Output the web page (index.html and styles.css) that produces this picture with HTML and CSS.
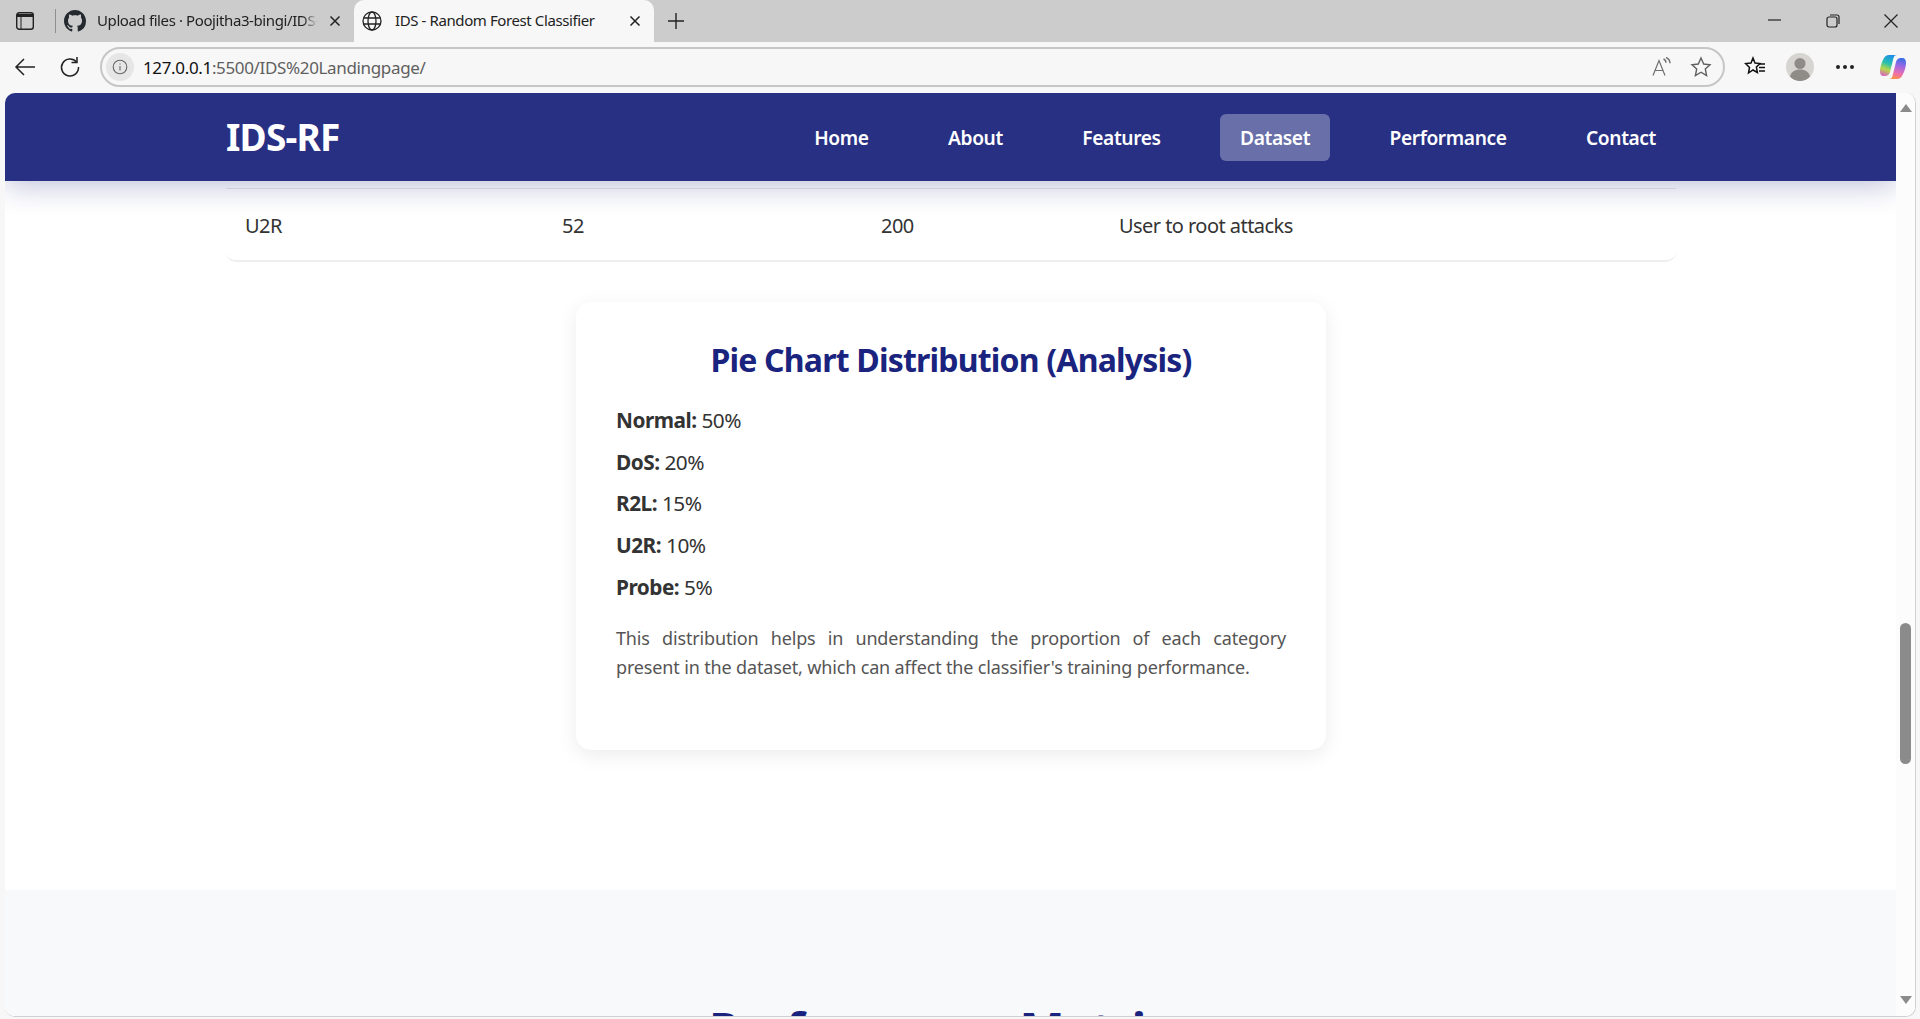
FILE: index.html
```html
<!DOCTYPE html>
<html lang="en">
<head>
    <meta charset="UTF-8">
    <meta name="viewport" content="width=device-width, initial-scale=1.0">
    <title>IDS - Random Forest Classifier</title>
    <link rel="stylesheet" href="styles.css">
</head>
<body>
    <!-- Barra de pestañas -->
    <div class="tabStrip">
        <div class="sideIcon">
            <svg width="20" height="20" viewBox="0 0 20 20" fill="none" stroke="#222" stroke-width="1.4"><rect x="1.700" y="1.700" width="16.600" height="16.600" rx="2.500"/><path d="M2 4.500h16" stroke-width="3"/><path d="M6 5.500v12.500" stroke-width="1"/></svg>
        </div>
        <div class="tabDivider"></div>
        <div class="tab">
            <svg class="tabIcon" width="22" height="22" viewBox="0 0 16 16" fill="#24292f"><path d="M8 0C3.58 0 0 3.58 0 8c0 3.54 2.29 6.53 5.47 7.59.4.07.55-.17.55-.38 0-.19-.01-.82-.01-1.49-2.01.37-2.53-.49-2.69-.94-.09-.23-.48-.94-.82-1.13-.28-.15-.68-.52-.01-.53.63-.01 1.08.58 1.23.82.72 1.21 1.87.87 2.33.66.07-.52.28-.87.51-1.07-1.78-.2-3.64-.89-3.64-3.95 0-.87.31-1.59.82-2.15-.08-.2-.36-1.02.08-2.12 0 0 .67-.21 2.2.82.64-.18 1.32-.27 2-.27s1.36.09 2 .27c1.53-1.04 2.2-.82 2.2-.82.44 1.1.16 1.92.08 2.12.51.56.82 1.27.82 2.15 0 3.07-1.87 3.75-3.65 3.95.29.25.54.73.54 1.48 0 1.07-.01 1.93-.01 2.2 0 .21.15.46.55.38A8.01 8.01 0 0 0 16 8c0-4.42-3.58-8-8-8z"/></svg>
            <span class="tabTitle tabFade">Upload files · Poojitha3-bingi/IDS-</span>
            <svg class="tabClose" width="14" height="14" viewBox="0 0 14 14" stroke="#222" stroke-width="1.5"><path d="M2.5 2.5l9 9M11.5 2.5l-9 9"/></svg>
        </div>
        <div class="tab tabActive">
            <svg class="tabIcon" width="22" height="22" viewBox="0 0 22 22" fill="none" stroke="#222" stroke-width="1.3"><circle cx="11" cy="11" r="9"/><ellipse cx="11" cy="11" rx="4" ry="9"/><path d="M2.6 8h16.8M2.6 14h16.8"/></svg>
            <span class="tabTitle">IDS - Random Forest Classifier</span>
            <svg class="tabClose" width="14" height="14" viewBox="0 0 14 14" stroke="#222" stroke-width="1.5"><path d="M2.5 2.5l9 9M11.5 2.5l-9 9"/></svg>
        </div>
        <svg class="newTab" width="18" height="18" viewBox="0 0 18 18" stroke="#222" stroke-width="1.4"><path d="M9 1v16M1 9h16"/></svg>
        <div class="windowBtns">
            <svg width="14" height="14" viewBox="0 0 14 14" stroke="#222" stroke-width="1.2"><path d="M0 6h13"/></svg>
            <svg width="14" height="14" viewBox="0 0 14 14" fill="none" stroke="#222" stroke-width="1.2"><rect x="1" y="3" width="10" height="10" rx="2"/><path d="M4 1h7a2 2 0 0 1 2 2v7"/></svg>
            <svg width="14" height="14" viewBox="0 0 14 14" stroke="#222" stroke-width="1.2"><path d="M0.5 0.5l13 13M13.5 0.5l-13 13"/></svg>
        </div>
    </div>

    <!-- Barra de direcciones -->
    <div class="toolbar">
        <svg class="toolIcon backIcon" width="22" height="22" viewBox="0 0 22 22" fill="none" stroke="#222" stroke-width="1.5"><path d="M21 11H2M10 3l-8 8 8 8"/></svg>
        <svg class="toolIcon reloadIcon" width="22" height="22" viewBox="0 0 22 22" fill="none" stroke="#222" stroke-width="1.5"><path d="M17.5 6A8.5 8.5 0 1 0 19.5 11"/><path d="M18 1v5.500h-5.500"/></svg>
        <div class="addressBar">
            <span class="infoBadge">
                <svg width="16" height="16" viewBox="0 0 16 16" fill="none" stroke="#666" stroke-width="1.1"><circle cx="8" cy="8" r="6.8"/><path d="M8 7v4.500M8 4.400v1.200"/></svg>
            </span>
            <span class="urlText"><span class="urlHost">127.0.0.1</span>:5500/IDS%20Landingpage/</span>
            <svg class="readIcon" width="20" height="20" viewBox="0 0 20 20" fill="none" stroke="#707070" stroke-width="1.200"><path d="M1 18.500L7 3.500l6 15M3.200 13.500h7.600"/><path d="M11.500 2c1.500.6 2.500 1.900 2.500 3.800M14 .5c2.500 1 4 3 4 5.800" stroke-width="1.400"/></svg>
            <svg class="starIcon" width="22" height="22" viewBox="0 0 22 22" fill="none" stroke="#606060" stroke-width="1.400"><path d="M11 2l2.700 6 6.300.7-4.700 4.300 1.300 6.500L11 16.200 5.400 19.500l1.300-6.500L2 8.700 8.300 8z"/></svg>
        </div>
        <svg class="favIcon" width="22" height="22" viewBox="0 0 22 22" fill="none" stroke="#111" stroke-width="1.500"><path d="M9 2l2 5 5 .5-3.600 3.400 1 5.600L9 14l-4.500 3 1-5.600L1.500 7.500 7 7z"/><path d="M15 8h6M15 11.500h6M15 15h6"/></svg>
        <div class="avatar">
            <svg width="28" height="28" viewBox="0 0 28 28" fill="#8f8c88"><circle cx="14" cy="10.500" r="5.500"/><path d="M4 24c1-5.500 5-7.500 10-7.500s9 2 10 7.500a14 14 0 0 1-20 0z"/></svg>
        </div>
        <div class="dots"><i></i><i></i><i></i></div>
        <svg class="copilot" width="28" height="28" viewBox="0 0 28 28">
            <defs>
                <linearGradient id="copL" x1="0.6" y1="0" x2="0.3" y2="1"><stop offset="0" stop-color="#1c8fe8"/><stop offset="0.4" stop-color="#28c0b0"/><stop offset="0.7" stop-color="#b8d84a"/><stop offset="1" stop-color="#d868c0"/></linearGradient>
                <linearGradient id="copR" x1="0.6" y1="0" x2="0.4" y2="1"><stop offset="0" stop-color="#3a6ee8"/><stop offset="0.4" stop-color="#a868e0"/><stop offset="0.75" stop-color="#f070a8"/><stop offset="1" stop-color="#f89048"/></linearGradient>
            </defs>
            <path d="M10 2h8c-2 0-3 1-3.500 3L11 19c-.5 2-2 4-5 4H5c-3 0-4-2-4-5 0-3 1-8 4-13 1-2 3-3 5-3z" fill="url(#copL)"/>
            <path d="M18 26h-8c2 0 3-1 3.500-3L17 9c.5-2 2-4 5-4h1c3 0 4 2 4 5 0 3-1 8-4 13-1 2-3 3-5 3z" fill="url(#copR)"/>
        </svg>
    </div>

    <!-- Contenido de la página -->
    <div class="viewport">
        <div class="page">
            <nav class="navbar">
                <div class="navInner">
                    <span class="logo">IDS-RF</span>
                    <ul class="navLinks">
                        <li><a href="#">Home</a></li>
                        <li><a href="#">About</a></li>
                        <li><a href="#">Features</a></li>
                        <li><a href="#" class="active">Dataset</a></li>
                        <li><a href="#">Performance</a></li>
                        <li><a href="#">Contact</a></li>
                    </ul>
                </div>
            </nav>

            <section class="datasetSection">
                <div class="tableWrap">
                    <table class="dataTable">
                        <tr>
                            <td class="colType">U2R</td>
                            <td class="colTrain">52</td>
                            <td class="colTest">200</td>
                            <td>User to root attacks</td>
                        </tr>
                    </table>
                </div>

                <div class="analysisCard">
                    <h3>Pie Chart Distribution (Analysis)</h3>
                    <p class="statRow"><strong>Normal:</strong> 50%</p>
                    <p class="statRow"><strong>DoS:</strong> 20%</p>
                    <p class="statRow"><strong>R2L:</strong> 15%</p>
                    <p class="statRow"><strong>U2R:</strong> 10%</p>
                    <p class="statRow"><strong>Probe:</strong> 5%</p>
                    <p class="cardNote"><span class="noteFirst">This distribution helps in understanding the proportion of each category</span> present in the dataset, which can affect the classifier's training performance.</p>
                </div>
            </section>

            <section class="metricsSection">
                <h2>Performance Metrics</h2>
            </section>
        </div>

        <div class="scrollbar">
            <span class="arrowUp"></span>
            <span class="thumb"></span>
            <span class="arrowDown"></span>
        </div>
    </div>
</body>
</html>
```

FILE: styles.css
```css
* {
    box-sizing: border-box;
}

html, body {
    height: 100%;
}

body {
    margin: 0;
    font-family: "Noto Sans", "Open Sans", sans-serif;
    display: flex;
    flex-direction: column;
    height: 1019px;
    overflow: hidden;
    background-color: #f7f7f7;
    color: #222;
}

/* Pestañas */
.tabStrip {
    height: 42px;
    flex: none;
    display: flex;
    align-items: center;
    background-color: #cccccc;
    font-size: 15px;
}

.sideIcon {
    width: 55px;
    padding-left: 15px;
    display: flex;
    align-items: center;
}

.tabDivider {
    width: 1px;
    height: 24px;
    background-color: #8f8f8f;
}

.tab {
    width: 298px;
    height: 42px;
    display: flex;
    align-items: center;
    padding: 0 12px 0 8px;
}

.tab .tabIcon {
    flex: none;
}

.tabTitle {
    flex: 1;
    min-width: 0;
    margin: 0 0 3px 12px;
    white-space: nowrap;
    overflow: hidden;
    letter-spacing: -0.4px;
}

.tabFade {
    margin-left: 11px;
    mask-image: linear-gradient(to right, #000 93%, transparent 100%);
}

.tabClose {
    flex: none;
    margin-left: 10px;
}

.tabActive {
    width: 300px;
    background-color: #f7f7f7;
    border-radius: 10px 10px 0 0;
    padding-left: 7px;
}

.newTab {
    margin-left: 13px;
}

.windowBtns {
    margin-left: auto;
    display: flex;
    gap: 44px;
    padding-right: 22px;
}

/* Direcciones */
.toolbar {
    height: 51px;
    flex: none;
    display: flex;
    align-items: center;
    padding-left: 14px;
    padding-bottom: 1px;
    background-color: #f7f7f7;
}

.reloadIcon {
    margin-left: 23px;
}

.addressBar {
    width: 1625px;
    height: 40px;
    margin-left: 19px;
    display: flex;
    align-items: center;
    border: 2px solid #c6c6c6;
    border-radius: 20px;
    padding: 0 11px 0 4px;
}

.infoBadge {
    width: 28px;
    height: 28px;
    border-radius: 50%;
    background-color: #e6e6e6;
    display: flex;
    align-items: center;
    justify-content: center;
}

.urlText {
    margin-left: 9px;
    font-size: 17px;
    letter-spacing: -0.35px;
    color: #5f5f5f;
}

.urlHost {
    color: #111;
}

.readIcon {
    margin-left: auto;
}

.starIcon {
    margin-left: 18px;
}

.favIcon {
    margin-left: 19px;
}

.avatar {
    width: 28px;
    height: 28px;
    margin-left: 20px;
    border-radius: 50%;
    overflow: hidden;
    background-color: #d6d5d2;
}

.dots {
    margin-left: 22px;
    display: flex;
    gap: 3px;
}

.dots i {
    width: 4px;
    height: 4px;
    border-radius: 50%;
    background-color: #222;
}

.copilot {
    margin-left: 25px;
}

/* Ventana de la página */
.viewport {
    flex: 1;
    min-height: 0;
    display: flex;
    margin: 0 4px 2px 5px;
    background-color: #fcfcfc;
    border-right: 1px solid #d0d0d0;
    border-bottom: 1px solid #d0d0d0;
    border-radius: 10px;
    overflow: hidden;
}

.page {
    flex: 1;
    min-width: 0;
    background-color: #fff;
    overflow: hidden;
}

.navbar {
    height: 88px;
    position: relative;
    z-index: 2;
    background-color: #283084;
    box-shadow: 0 4px 30px rgba(26, 35, 126, 0.3);
}

.navInner {
    width: 1450px;
    height: 100%;
    margin-left: 221px;
    display: flex;
    align-items: center;
    justify-content: space-between;
}

.logo {
    padding-bottom: 2px;
    font-size: 37px;
    font-weight: 700;
    color: #fff;
    letter-spacing: -0.8px;
}

.navLinks {
    list-style: none;
    margin: 0;
    padding: 0;
    display: flex;
    gap: 39.5px;
}

.navLinks a {
    display: block;
    padding: 10px 20px;
    height: 47px;
    border-radius: 6px;
    color: #fff;
    text-decoration: none;
    font-size: 19.2px;
    font-weight: 600;
    letter-spacing: -0.4px;
}

.navLinks a.active {
    background-color: #696fa9;
}

/* Tabla */
.datasetSection {
    height: 709px;
    padding-top: 7px;
}

.tableWrap {
    width: 1450px;
    margin-left: 221px;
    border-top: 1px solid #e6e6ee;
    border-bottom: 2px solid #eeeeee;
    border-radius: 0 0 10px 10px;
}

.dataTable {
    width: 100%;
    border-collapse: collapse;
    font-size: 20px;
    letter-spacing: -0.55px;
    color: #333;
}

.dataTable td {
    height: 71px;
    padding: 2px 19px 0;
}

.colType {
    width: 317px;
}

.colTrain {
    width: 319px;
}

.colTest {
    width: 238px;
}

/* Tarjeta */
.analysisCard {
    width: 750px;
    height: 448px;
    margin: 40px 0 0 571px;
    padding: 36px 40px;
    background-color: #fff;
    border-radius: 15px;
    box-shadow: 0 5px 20px rgba(0, 0, 0, 0.08);
    color: #333;
}

.analysisCard h3 {
    margin: 0 0 17px;
    text-align: center;
    font-size: 32px;
    font-weight: 700;
    line-height: 44px;
    letter-spacing: -0.8px;
    color: #1a237e;
}

.statRow {
    margin: 0;
    height: 41.7px;
    line-height: 42px;
    font-size: 20.8px;
    letter-spacing: -0.5px;
}

.cardNote {
    margin: 17px 0 0;
    font-size: 18px;
    line-height: 29px;
    letter-spacing: -0.15px;
    color: #555;
}

.noteFirst {
    display: block;
    text-align-last: justify;
}

/* Siguiente sección */
.metricsSection {
    height: 300px;
    padding-top: 107px;
    background-color: #f8f9fa;
}

.metricsSection h2 {
    margin: 0;
    text-align: center;
    font-size: 48px;
    font-weight: 700;
    letter-spacing: -1px;
    color: #1a237e;
}

/* Barra de desplazamiento */
.scrollbar {
    width: 19px;
    flex: none;
    display: flex;
    flex-direction: column;
    align-items: center;
    padding: 11px 0 12px;
    background-color: #fcfcfc;
}

.arrowUp {
    border: 6px solid transparent;
    border-top: 0;
    border-bottom: 8px solid #8b8b8b;
}

.thumb {
    width: 11px;
    height: 141px;
    margin-top: 511px;
    border-radius: 6px;
    background-color: #8b8b8b;
}

.arrowDown {
    margin-top: auto;
    border: 6px solid transparent;
    border-bottom: 0;
    border-top: 8px solid #8b8b8b;
}
```
